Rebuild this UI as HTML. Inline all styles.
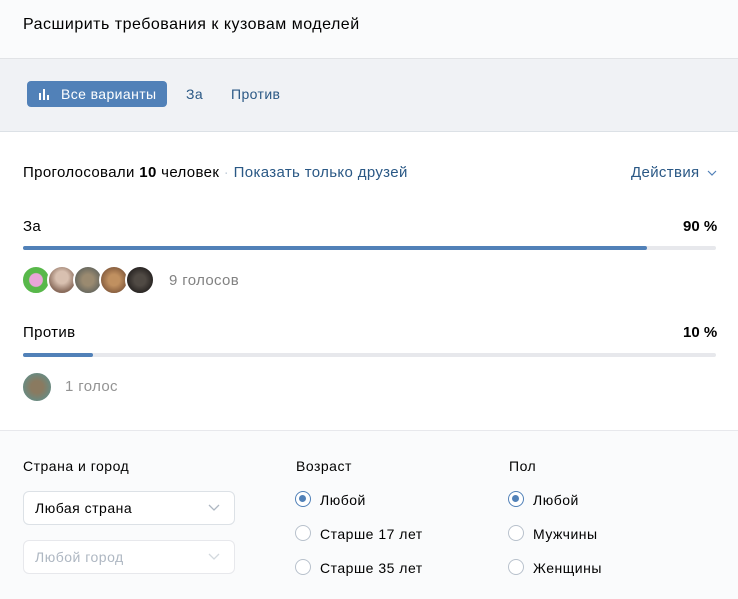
<!DOCTYPE html>
<html><head><meta charset="utf-8"><style>
*{margin:0;padding:0;box-sizing:border-box}
body{width:738px;height:599px;font-family:"Liberation Sans",sans-serif;background:#fff;position:relative;overflow:hidden;color:#000}
.a{position:absolute;white-space:nowrap}
.hdr{left:0;top:0;width:738px;height:59px;background:#fafbfc;border-bottom:1px solid #e1e3e6}
.tabs{left:0;top:59px;width:738px;height:73px;background:#f0f2f5;border-bottom:1px solid #dce1e6}
.bot{left:0;top:430px;width:738px;height:169px;background:#fafbfc;border-top:1px solid #e7e8ec}
.bar{height:4px;background:#e7e8ec;border-radius:2px;left:23px;width:693px}
.bar i{display:block;height:4px;background:#5181b8;border-radius:2px}
.av{width:30px;height:30px;border-radius:50%;border:2px solid #fff}
.sel{left:23px;width:212px;height:34px;border:1px solid #dce1e6;border-radius:6px;background:#fff;font-size:14px;letter-spacing:.5px;padding:8px 11px}
.rad{width:16px;height:16px;border-radius:50%;border:1px solid #b8c1cc;background:#fff}
.rad.on{border:1.5px solid #5181b8}
.rad.on:after{content:"";position:absolute;left:3px;top:3px;width:7px;height:7px;border-radius:50%;background:#5181b8}
.t14{font-size:14px}
.m{font-size:15px;letter-spacing:.35px}
.f{font-size:14px;letter-spacing:.5px}
</style></head><body>
<div class="a hdr"></div>
<div class="a" style="left:23px;top:16px;font-size:16px;letter-spacing:.5px;color:#000">Расширить требования к кузовам моделей</div>
<div class="a tabs"></div>
<div class="a" style="left:27px;top:81px;width:140px;height:26px;background:#5181b8;border-radius:4px"></div>
<svg class="a" style="left:38px;top:87px" width="14" height="14" viewBox="0 0 14 14"><rect x="1" y="6" width="2" height="7" fill="#fff"/><rect x="5" y="2" width="2" height="11" fill="#fff"/><rect x="9" y="8" width="2" height="5" fill="#fff"/></svg>
<div class="a t14" style="left:61px;top:86px;color:#fff;letter-spacing:.4px">Все варианты</div>
<div class="a t14" style="left:186px;top:86px;color:#2a5885;letter-spacing:.4px">За</div>
<div class="a t14" style="left:231px;top:86px;color:#2a5885;letter-spacing:.4px">Против</div>

<div class="a m" style="left:23px;top:164px">Проголосовали <b>10</b> человек <span style="color:#c5d0db">·</span> <span style="color:#2a5885">Показать только друзей</span></div>
<div class="a m" style="left:631px;top:164px;color:#2a5885">Действия</div>
<svg class="a" style="left:707px;top:170px" width="10" height="6"><path d="M1 1l4 4 4-4" fill="none" stroke="#5181b8" stroke-width="1.2"/></svg>

<div class="a m" style="left:23px;top:218px">За</div>
<div class="a m" style="left:683px;top:218px;font-weight:bold;letter-spacing:0">90 %</div>
<div class="a bar" style="top:246px"><i style="width:624px"></i></div>
<div class="a av" style="left:21px;top:265px;background:radial-gradient(circle,#e9a5d8 35%,#58b84a 40%)"></div>
<div class="a av" style="left:47px;top:265px;background:radial-gradient(circle at 50% 40%,#d8c0b0 30%,#8a6c5c 70%)"></div>
<div class="a av" style="left:73px;top:265px;background:radial-gradient(circle,#9a8a70 30%,#6a6a60 70%)"></div>
<div class="a av" style="left:99px;top:265px;background:radial-gradient(circle,#c09060 30%,#8a6040 70%)"></div>
<div class="a av" style="left:125px;top:265px;background:radial-gradient(circle,#504a44 30%,#2a2624 70%)"></div>
<div class="a m" style="left:169px;top:272px;color:#828282">9 голосов</div>

<div class="a m" style="left:23px;top:324px">Против</div>
<div class="a m" style="left:683px;top:324px;font-weight:bold;letter-spacing:0">10 %</div>
<div class="a bar" style="top:353px"><i style="width:70px"></i></div>
<div class="a av" style="left:21px;top:371px;width:32px;height:32px;background:radial-gradient(circle,#8a7a60 30%,#6a8a80 70%)"></div>
<div class="a m" style="left:65px;top:378px;color:#939393">1 голос</div>

<div class="a bot"></div>
<div class="a f" style="left:23px;top:458px">Страна и город</div>
<div class="a f" style="left:296px;top:458px">Возраст</div>
<div class="a f" style="left:509px;top:458px">Пол</div>
<div class="a sel" style="top:491px">Любая страна</div>
<div class="a sel" style="top:540px;color:#aeb7c2;border-color:#e7e8ec">Любой город</div>
<svg class="a" style="left:208px;top:504px" width="12" height="8"><path d="M1 1l5 5 5-5" fill="none" stroke="#aeb7c2" stroke-width="1.3"/></svg>
<svg class="a" style="left:208px;top:553px" width="12" height="8"><path d="M1 1l5 5 5-5" fill="none" stroke="#d3d9de" stroke-width="1.3"/></svg>

<div class="a rad on" style="left:295px;top:491px"></div><div class="a f" style="left:320px;top:492px">Любой</div>
<div class="a rad" style="left:295px;top:525px"></div><div class="a f" style="left:320px;top:526px">Старше 17 лет</div>
<div class="a rad" style="left:295px;top:559px"></div><div class="a f" style="left:320px;top:560px">Старше 35 лет</div>
<div class="a rad on" style="left:508px;top:491px"></div><div class="a f" style="left:533px;top:492px">Любой</div>
<div class="a rad" style="left:508px;top:525px"></div><div class="a f" style="left:533px;top:526px">Мужчины</div>
<div class="a rad" style="left:508px;top:559px"></div><div class="a f" style="left:533px;top:560px">Женщины</div>
</body></html>
